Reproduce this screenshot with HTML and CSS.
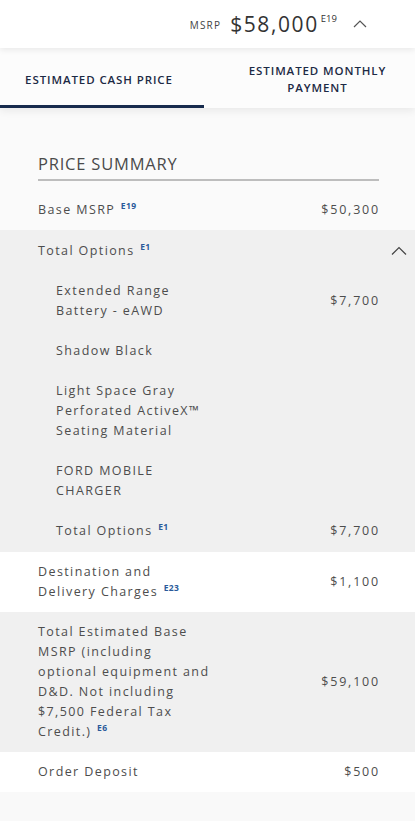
FILE: index.html
```html
<!DOCTYPE html>
<html lang="en">
<head>
<meta charset="utf-8">
<link rel="stylesheet" href="styles.css">
</head>
<body>
<header class="topbar">
  <span class="msrp-label">MSRP</span>
  <span class="msrp-value">$58,000<sup class="msrp-sup">E19</sup></span>
  <svg class="chev chev-top" width="14" height="9" viewBox="0 0 14 9"><path d="M1 8 L7 2 L13 8" fill="none" stroke="#555" stroke-width="1.2"/></svg>
</header>
<nav class="tabs">
  <div class="tab tab-active">ESTIMATED CASH PRICE</div>
  <div class="tab tab-other">ESTIMATED MONTHLY<br>PAYMENT</div>
</nav>
<main class="content">
  <h2 class="summary-title">PRICE SUMMARY</h2>
  <div class="row">
    <div class="label">Base MSRP <sup class="fn">E19</sup></div>
    <div class="price">$50,300</div>
  </div>
  <section class="options">
    <div class="options-head">
      <div class="label">Total Options <sup class="fn">E1</sup></div>
      <svg class="chev" width="16" height="9" viewBox="0 0 16 9"><path d="M1 8.5 L8 1.5 L15 8.5" fill="none" stroke="#444" stroke-width="1.2"/></svg>
    </div>
    <div class="sub-row">
      <div class="label sub-label">Extended Range Battery - eAWD</div>
      <div class="price">$7,700</div>
    </div>
    <div class="sub-row">
      <div class="label sub-label">Shadow Black</div>
    </div>
    <div class="sub-row">
      <div class="label sub-label">Light Space Gray Perforated ActiveX™ Seating Material</div>
    </div>
    <div class="sub-row">
      <div class="label sub-label">FORD MOBILE CHARGER</div>
    </div>
    <div class="sub-row sub-total">
      <div class="label">Total Options <sup class="fn">E1</sup></div>
      <div class="price">$7,700</div>
    </div>
  </section>
  <div class="row row-white">
    <div class="label main-label">Destination and Delivery Charges <sup class="fn">E23</sup></div>
    <div class="price">$1,100</div>
  </div>
  <div class="row row-gray">
    <div class="label main-label">Total Estimated Base MSRP (including optional equipment and D&amp;D. Not including $7,500 Federal Tax Credit.) <sup class="fn">E6</sup></div>
    <div class="price">$59,100</div>
  </div>
  <div class="row row-white">
    <div class="label">Order Deposit</div>
    <div class="price">$500</div>
  </div>
</main>
</body>
</html>
```

FILE: styles.css
```css
* { box-sizing: border-box; }
html, body { margin: 0; padding: 0; }
body {
  background: #f9f9f9;
  font-family: "Open Sans", "Liberation Sans", sans-serif;
  color: #4d4d4d;
  width: 415px;
}
.topbar {
  position: relative;
  z-index: 3;
  height: 48px;
  background: #fff;
  display: flex;
  justify-content: flex-end;
  align-items: center;
  padding-right: 48px;
  box-shadow: 0 2px 6px rgba(0,0,0,0.08);
}
.msrp-label {
  font-size: 10px;
  letter-spacing: 1.2px;
  color: #444;
  margin-right: 9px;
  margin-top: 2px;
}
.msrp-value {
  font-size: 21px;
  letter-spacing: 1.6px;
  color: #333;
  font-weight: 400;
  line-height: 1;
}
.msrp-sup {
  font-size: 9.5px;
  letter-spacing: 0;
  vertical-align: 10px;
  margin-left: 2px;
  color: #333;
}
.chev-top { margin-left: 16px; margin-top: -2px; }
.tabs {
  position: relative;
  z-index: 2;
  display: flex;
  height: 60px;
  background: #fcfcfc;
  box-shadow: 0 3px 8px rgba(0,0,0,0.07);
}
.tab {
  display: flex;
  align-items: center;
  justify-content: center;
  text-align: center;
  font-size: 11.5px;
  font-weight: 600;
  letter-spacing: 0.9px;
  line-height: 17px;
  color: #1c2a45;
}
.tab-active {
  width: 204px;
  border-bottom: 3px solid #172b4d;
  padding-top: 5px;
  padding-right: 6px;
}
.tab-other {
  flex: 1;
  padding-left: 16px;
  border-bottom: 3px solid transparent;
  padding-top: 4px;
}
.content {
  padding-top: 45px;
  background: #fafafa;
}
.summary-title {
  margin: 0 36px 0 38px;
  font-size: 16.5px;
  font-weight: 400;
  letter-spacing: 0.8px;
  color: #4a4a4a;
  line-height: 22px;
  padding-bottom: 4px;
  border-bottom: 2px solid #bdbdbd;
}
.row {
  display: flex;
  justify-content: space-between;
  align-items: center;
  padding: 10px 36px 10px 38px;
}
.row:first-of-type { padding-top: 19px; }
.row-white { background: #fff; }
.row-gray { background: #f0f0f0; }
.label {
  font-size: 12.5px;
  letter-spacing: 1.4px;
  line-height: 20px;
  color: #4d4d4d;
}
.main-label { width: 172px; }
.price {
  font-size: 12.5px;
  letter-spacing: 1.8px;
  line-height: 20px;
  color: #4d4d4d;
  white-space: nowrap;
  margin-right: -1px;
}
.fn {
  font-size: 8.5px;
  font-weight: 700;
  color: #2a5a9a;
  letter-spacing: 0.4px;
  vertical-align: 5px;
  line-height: 0;
  margin-left: 1px;
}
.options {
  background: #f0f0f0;
  padding: 11px 0 11px;
}
.options-head {
  display: flex;
  justify-content: space-between;
  align-items: center;
  padding: 0 8px 20px 38px;
}
.options-head .chev { margin-top: -1px; }
.sub-row {
  display: flex;
  justify-content: space-between;
  align-items: center;
  padding: 0 36px 20px 56px;
}
.sub-label { width: 152px; }
.sub-total { padding-bottom: 0; }
.content::after {
  content: "";
  display: block;
  height: 29px;
  background: #f9f9f9;
}
```
